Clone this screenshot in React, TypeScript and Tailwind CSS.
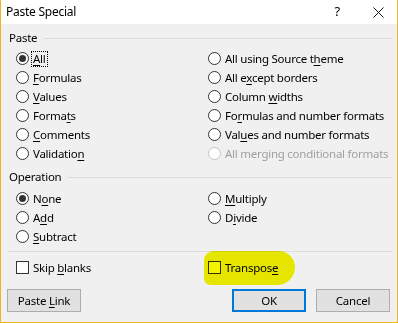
import React from "react";

const U = ({ children }: { children: React.ReactNode }) => (
  <span className="underline underline-offset-2 decoration-1">{children}</span>
);

function Radio({ checked, disabled }: { checked?: boolean; disabled?: boolean }) {
  return (
    <span
      className={
        "flex h-[13px] w-[13px] shrink-0 items-center justify-center rounded-full border bg-white " +
        (disabled ? "border-[#c4c4c4]" : "border-[#333333]")
      }
    >
      {checked && <span className="h-[7px] w-[7px] rounded-full bg-[#333333]" />}
    </span>
  );
}

function Row({
  children,
  checked,
  disabled,
  focus,
}: {
  children: React.ReactNode;
  checked?: boolean;
  disabled?: boolean;
  focus?: boolean;
}) {
  return (
    <div className="flex h-[19px] items-center gap-[4px] whitespace-nowrap">
      <Radio checked={checked} disabled={disabled} />
      <span
        className={
          (disabled ? "text-[#a0a0a0] " : "text-black ") +
          (focus ? "outline outline-1 outline-dotted outline-black leading-[14px] px-[1px] -ml-[1px]" : "")
        }
      >
        {children}
      </span>
    </div>
  );
}

function Check({ children }: { children: React.ReactNode }) {
  return (
    <div className="flex h-[19px] items-center gap-[4px] whitespace-nowrap">
      <span className="h-[13px] w-[13px] shrink-0 border border-[#333333] bg-white" />
      <span>{children}</span>
    </div>
  );
}

function GroupHeader({ label }: { label: string }) {
  return (
    <div className="flex h-[16px] items-center gap-[6px] pl-[8px] pr-[5px]">
      <span>{label}</span>
      <span className="h-px flex-1 bg-[#dcdcdc]" />
    </div>
  );
}

export default function App() {
  return (
    <div
      className="relative h-[323px] w-[398px] overflow-hidden border-x border-b border-[#f0b323] bg-[#f0f0f0] text-[11.5px] tracking-[-0.25px] text-black"
      style={{ fontFamily: '"Noto Sans", "Open Sans", sans-serif' }}
    >
      {/* title bar */}
      <div className="flex h-[24px] items-center bg-white pl-[5px]">
        <span className="text-[12px]">Paste Special</span>
        <span className="ml-auto mr-[33px] text-[13px]">?</span>
        <svg width="11" height="11" viewBox="0 0 11 11" className="mr-[13px]">
          <path d="M0.5 0.5 L10.5 10.5 M10.5 0.5 L0.5 10.5" stroke="#111" strokeWidth="1" />
        </svg>
      </div>

      <div className="pt-[6px]">
        <GroupHeader label="Paste" />
        <div className="grid grid-cols-[192px_1fr] pl-[15px] pt-[3px]">
          <div>
            <Row checked focus>
              <U>A</U>ll
            </Row>
            <Row>
              <U>F</U>ormulas
            </Row>
            <Row>
              <U>V</U>alues
            </Row>
            <Row>
              Forma<U>t</U>s
            </Row>
            <Row>
              <U>C</U>omments
            </Row>
            <Row>
              Validatio<U>n</U>
            </Row>
          </div>
          <div>
            <Row>
              All using Source t<U>h</U>eme
            </Row>
            <Row>
              All e<U>x</U>cept borders
            </Row>
            <Row>
              Column <U>w</U>idths
            </Row>
            <Row>
              Fo<U>r</U>mulas and number formats
            </Row>
            <Row>
              Val<U>u</U>es and number formats
            </Row>
            <Row disabled>All merging conditional formats</Row>
          </div>
        </div>

        <div className="mt-[6px]">
          <GroupHeader label="Operation" />
        </div>
        <div className="grid grid-cols-[192px_1fr] pl-[15px] pt-[4px]">
          <div>
            <Row checked>
              N<U>o</U>ne
            </Row>
            <Row>
              A<U>d</U>d
            </Row>
            <Row>
              <U>S</U>ubtract
            </Row>
          </div>
          <div>
            <Row>
              <U>M</U>ultiply
            </Row>
            <Row>
              D<U>i</U>vide
            </Row>
          </div>
        </div>

        <div className="ml-[7px] mr-[5px] mt-[5px] h-px bg-[#dcdcdc]" />

        <div className="grid grid-cols-[192px_1fr] pl-[15px] pt-[6px]">
          <Check>
            Skip <U>b</U>lanks
          </Check>
          <Check>
            Transpos<U>e</U>
          </Check>
        </div>

        <div className="mt-[12px] flex items-center px-[6px]">
          <button className="h-[23px] w-[74px] border border-[#adadad] bg-[#e1e1e1]">
            Paste <U>L</U>ink
          </button>
          <button className="ml-auto h-[23px] w-[74px] border-2 border-[#0078d7] bg-[#e1e1e1]">OK</button>
          <button className="ml-[10px] mr-[1px] h-[23px] w-[74px] border border-[#adadad] bg-[#e1e1e1]">
            Cancel
          </button>
        </div>
      </div>

      {/* highlighter mark */}
      <div className="pointer-events-none absolute left-[203px] top-[251px] h-[34px] w-[91px] rounded-[12px_20px_22px_8px] bg-[#f4f400] mix-blend-multiply" />
    </div>
  );
}
